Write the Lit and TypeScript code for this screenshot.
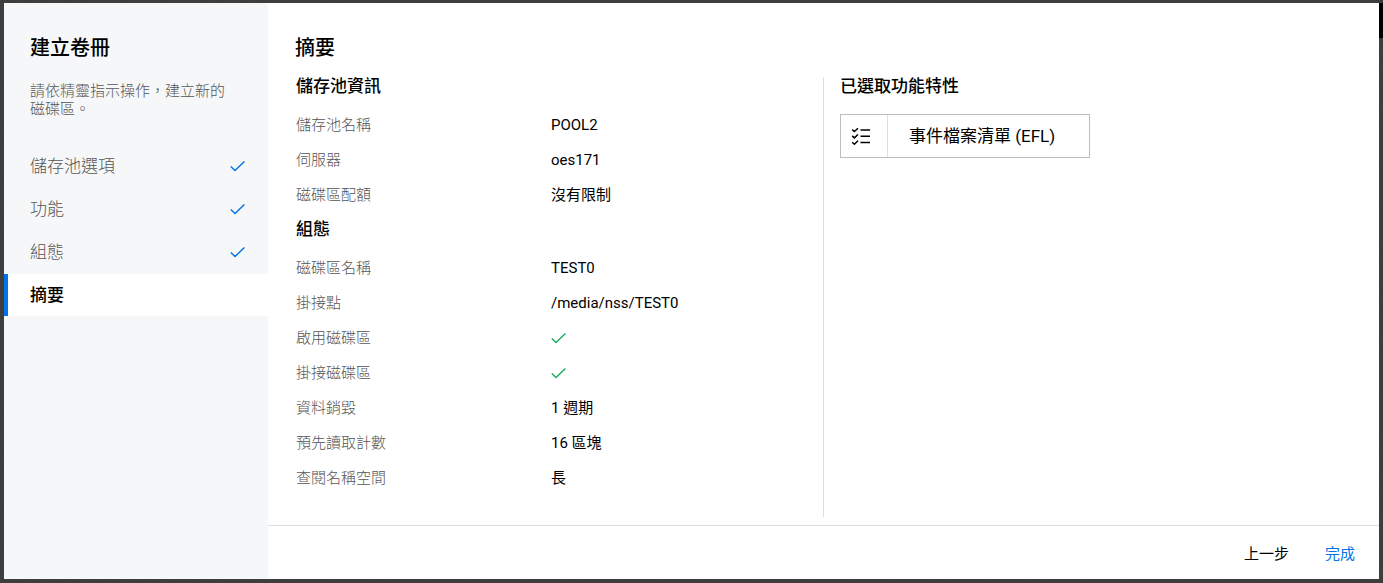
import { LitElement, html, css } from "lit";
import { customElement, property, state } from "lit/decorators.js";

interface Step {
  label: string;
  done: boolean;
}

interface Entry {
  label: string;
  value: string | boolean;
}

interface Section {
  title: string;
  entries: Entry[];
}

const STEPS: Step[] = [
  { label: "儲存池選項", done: true },
  { label: "功能", done: true },
  { label: "組態", done: true },
  { label: "摘要", done: false },
];

const SECTIONS: Section[] = [
  {
    title: "儲存池資訊",
    entries: [
      { label: "儲存池名稱", value: "POOL2" },
      { label: "伺服器", value: "oes171" },
      { label: "磁碟區配額", value: "沒有限制" },
    ],
  },
  {
    title: "組態",
    entries: [
      { label: "磁碟區名稱", value: "TEST0" },
      { label: "掛接點", value: "/media/nss/TEST0" },
      { label: "啟用磁碟區", value: true },
      { label: "掛接磁碟區", value: true },
      { label: "資料銷毀", value: "1 週期" },
      { label: "預先讀取計數", value: "16 區塊" },
      { label: "查閱名稱空間", value: "長" },
    ],
  },
];

const check = html`
  <svg viewBox="0 0 16 16" width="16" height="16" fill="none" stroke="currentColor" aria-hidden="true">
    <path d="M0.8 8.4 L5 12.6 L14.4 3.4" stroke-width="1.4" />
  </svg>
`;

@customElement("wizard-steps")
class WizardSteps extends LitElement {
  @property({ type: Array }) steps: Step[] = [];
  @property({ type: Number }) current = 0;

  static styles = css`
    :host {
      display: block;
      padding-top: 33px;
      background: #f5f7f9;
      color: #000;
    }
    .title {
      margin: 0;
      padding: 0 26px;
      font-size: 20px;
      line-height: 24px;
      font-weight: 500;
    }
    .intro {
      margin: 22px 0 27px;
      padding: 0 36px 0 26px;
      font-size: 15px;
      line-height: 18px;
      font-weight: 300;
      color: #555;
    }
    .list {
      display: grid;
      gap: 1px;
      margin: 0;
      padding: 0;
      list-style: none;
    }
    .step {
      display: flex;
      align-items: center;
      justify-content: space-between;
      width: 100%;
      height: 42px;
      padding: 0 22px;
      border: 0;
      border-left: 4px solid transparent;
      background: none;
      font: inherit;
      font-size: 17px;
      line-height: 20px;
      font-weight: 300;
      color: #555;
      text-align: left;
      box-sizing: border-box;
      cursor: pointer;
    }
    .step svg {
      color: #0073e7;
    }
    .step.current {
      border-left-color: #0073e7;
      background: #fff;
      color: #000;
      font-weight: 500;
    }
  `;

  render() {
    return html`
      <h1 class="title">建立卷冊</h1>
      <p class="intro">請依精靈指示操作，建立新的磁碟區。</p>
      <ol class="list">
        ${this.steps.map(
          (s, i) => html`<li>
            <button
              class="step ${i === this.current ? "current" : ""}"
              type="button"
              aria-current=${i === this.current ? "step" : "false"}
            >
              <span>${s.label}</span>${s.done ? check : ""}
            </button>
          </li>`
        )}
      </ol>
    `;
  }
}

@customElement("summary-section")
class SummarySection extends LitElement {
  @property({ type: Object }) section!: Section;

  static styles = css`
    :host {
      display: block;
    }
    .heading {
      margin: 0 0 4px;
      font-size: 17px;
      line-height: 34px;
      font-weight: 500;
    }
    .entries {
      margin: 0;
    }
    .entry {
      display: grid;
      grid-template-columns: 1fr 1fr;
      align-items: center;
      height: 35px;
      font-size: 15px;
      line-height: 20px;
    }
    .label {
      font-weight: 300;
      color: #555;
    }
    .value {
      display: flex;
      margin: 0;
    }
    .value svg {
      color: #1aac60;
    }
  `;

  render() {
    return html`
      <h3 class="heading">${this.section.title}</h3>
      <dl class="entries">
        ${this.section.entries.map(
          (e) => html`<div class="entry">
            <dt class="label">${e.label}</dt>
            <dd class="value">${e.value === true ? check : e.value}</dd>
          </div>`
        )}
      </dl>
    `;
  }
}

@customElement("feature-card")
class FeatureCard extends LitElement {
  @property() label = "";

  static styles = css`
    :host {
      display: flex;
      width: 250px;
      height: 44px;
      border: 1px solid #bcbec0;
      box-sizing: border-box;
    }
    .icon {
      display: flex;
      align-items: center;
      justify-content: center;
      width: 47px;
      padding-right: 6px;
      box-sizing: border-box;
      border-right: 1px solid #dcdedf;
    }
    .label {
      flex: 1;
      align-self: center;
      padding: 0 21px;
      font-size: 17px;
      line-height: 24px;
      white-space: nowrap;
    }
  `;

  render() {
    return html`
      <span class="icon">
        <svg viewBox="0 0 20 18" width="20" height="18" fill="none" stroke="#000" stroke-width="1.5" aria-hidden="true">
          <path d="M1.2 2.6 L3.4 4.6 L7 1.2 M1.2 8.9 L3.4 10.9 L7 7.5 M1.2 15.2 L3.4 17.2 L7 13.8" />
          <path d="M9.5 3 H19 M9.5 9.2 H19 M9.5 15.4 H19" />
        </svg>
      </span>
      <span class="label">${this.label}</span>
    `;
  }
}

@customElement("app-root")
class AppRoot extends LitElement {
  @state() private current = 3;

  static styles = css`
    :host {
      display: grid;
      grid-template-columns: 1fr 4px;
      min-height: 100vh;
      padding: 3px 0 4px 4px;
      box-sizing: border-box;
      background: repeating-linear-gradient(45deg, #3c3c3c 0 2px, #404040 2px 4px);
      color: #000;
      font-family: Roboto, "Noto Sans CJK TC", sans-serif;
    }
    .dialog {
      display: grid;
      grid-template-columns: 264px 1fr;
      background: #fff;
    }
    .scroll-thumb {
      height: 35px;
      background: #000;
    }
    .main {
      display: flex;
      flex-direction: column;
      min-width: 0;
    }
    .title {
      margin: 0;
      padding: 33px 27px 0;
      font-size: 20px;
      line-height: 24px;
      font-weight: 500;
    }
    .columns {
      flex: 1;
      display: grid;
      grid-template-columns: 1fr 1fr;
      margin: 17px 1px 8px 0;
    }
    .details {
      margin-top: -8px;
      padding: 0 17px 0 28px;
    }
    .features {
      border-left: 1px solid #dcdedf;
      padding: 0 16px;
    }
    .heading {
      margin: 0 0 18px;
      font-size: 17px;
      line-height: 19px;
      font-weight: 500;
    }
    .footer {
      display: flex;
      justify-content: flex-end;
      gap: 36px;
      height: 54px;
      padding: 0 24px;
      box-sizing: border-box;
      border-top: 1px solid #dcdedf;
    }
    .action {
      padding: 0;
      border: 0;
      background: none;
      font: inherit;
      font-size: 15px;
      color: #000;
      cursor: pointer;
    }
    .action.primary {
      color: #0073e7;
    }
  `;

  render() {
    return html`
      <div class="dialog" role="dialog" aria-label="建立卷冊">
        <wizard-steps .steps=${STEPS} .current=${this.current}></wizard-steps>
        <main class="main">
          <h2 class="title">摘要</h2>
          <div class="columns">
            <div class="details">
              ${SECTIONS.map((s) => html`<summary-section .section=${s}></summary-section>`)}
            </div>
            <section class="features">
              <h3 class="heading">已選取功能特性</h3>
              <feature-card label="事件檔案清單 (EFL)"></feature-card>
            </section>
          </div>
          <footer class="footer">
            <button class="action" type="button">上一步</button>
            <button class="action primary" type="button">完成</button>
          </footer>
        </main>
      </div>
      <div class="scroll-thumb"></div>
    `;
  }
}
